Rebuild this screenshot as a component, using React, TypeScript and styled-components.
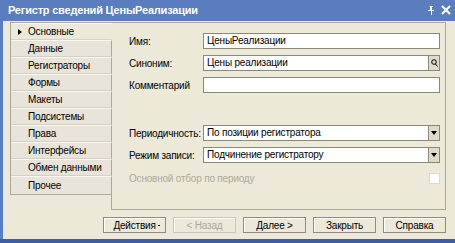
import React from "react";
import styled, {createGlobalStyle} from "styled-components";

const GlobalStyle = createGlobalStyle`
    html, body {
        margin: 0;
        padding: 0;
        width: 455px;
        height: 243px;
        overflow: hidden;
        background: #5a7dbf;
    }
    * {
        box-sizing: border-box;
    }
`;

const Window = styled.div`
    width: 455px;
    height: 243px;
    display: flex;
    flex-direction: column;
    background: #5a7dbf;
    border-bottom: 4px solid #3b5ea6;
    font-family: "Liberation Sans", Arial, sans-serif;
    font-size: 10px;
    color: #000;
`;

const TitleBar = styled.div`
    height: 21px;
    display: flex;
    align-items: center;
    padding: 0 4px 1px 8px;
    color: #fff;
    font-weight: bold;
    font-size: 11px;
`;

const Title = styled.div`
    flex: 1;
    letter-spacing: -0.2px;
`;

const TitleIcon = styled.svg`
    display: block;
    margin-left: 6px;
`;

const Body = styled.div`
    flex: 1;
    margin-left: 3px;
    background: #ece9d8;
    padding: 1px 9px 0 7px;
    display: flex;
    flex-direction: column;
`;

const Main = styled.div`
    display: flex;
    align-items: flex-start;
    height: 188px;
`;

const TabList = styled.div`
    width: 102px;
    height: 173px;
    margin-right: -1px;
    position: relative;
    z-index: 1;
    border: 1px solid #aca899;
    border-right: none;
    display: flex;
    flex-direction: column;
`;

const Tab = styled.div<{ $active?: boolean }>`
    height: 17px;
    flex: none;
    display: flex;
    align-items: center;
    padding-left: 17px;
    background: ${p => p.$active ? "#ece9d8" : "#e8e4da"};
    border-bottom: 1px solid ${p => p.$active ? "#d6d2c4" : "#d4d0c4"};
    border-top: 1px solid #f8f7f2;
    border-right: 1px solid ${p => p.$active ? "transparent" : "#aca899"};
    position: relative;
    white-space: nowrap;
    letter-spacing: -0.2px;
    &:last-child {
        border-bottom: none;
    }
`;

const Marker = styled.span`
    position: absolute;
    left: 7px;
    top: 5px;
    width: 0;
    height: 0;
    border-left: 4px solid #000;
    border-top: 3px solid transparent;
    border-bottom: 3px solid transparent;
`;

const Panel = styled.div`
    flex: 1;
    height: 188px;
    border: 1px solid #aca899;
    padding: 10px 5px 0 17px;
    display: flex;
    flex-direction: column;
`;

const FieldGrid = styled.div`
    display: grid;
    grid-template-columns: 74px 1fr;
    grid-auto-rows: 16px;
    row-gap: 6px;
    align-items: center;
`;

const Label = styled.div<{ $disabled?: boolean }>`
    white-space: nowrap;
    letter-spacing: -0.2px;
    color: ${p => p.$disabled ? "#aca899" : "#000"};
`;

const Field = styled.div`
    height: 16px;
    display: flex;
    border: 1px solid #8c8877;
    background: #fff;
`;

const FieldText = styled.div`
    flex: 1;
    padding-left: 3px;
    line-height: 14px;
    white-space: nowrap;
    overflow: hidden;
    letter-spacing: -0.2px;
`;

const FieldButton = styled.div`
    width: 11px;
    flex: none;
    border-left: 1px solid #8c8877;
    background: #dedbcc;
    display: flex;
    align-items: center;
    justify-content: center;
`;

const Arrow = styled.span`
    width: 0;
    height: 0;
    border-top: 4px solid #000;
    border-left: 3px solid transparent;
    border-right: 3px solid transparent;
`;

const Spacer = styled.div<{ $h: number }>`
    height: ${p => p.$h}px;
    flex: none;
`;

const CheckRow = styled.div`
    display: flex;
    align-items: center;
    justify-content: space-between;
    height: 11px;
`;

const CheckBox = styled.div`
    width: 11px;
    height: 11px;
    border: 1px solid #dcd9cc;
    background: #fff;
`;

const ButtonRow = styled.div`
    display: flex;
    justify-content: flex-end;
    gap: 7px;
    margin-top: 7px;
`;

const Button = styled.div<{ $disabled?: boolean }>`
    width: 63px;
    height: 16px;
    border: 1px solid ${p => p.$disabled ? "#c9c6b8" : "#8f8b7d"};
    box-shadow: inset 1px 1px 0 #fff;
    background: #ece9d8;
    display: flex;
    align-items: center;
    justify-content: center;
    color: ${p => p.$disabled ? "#aca899" : "#000"};
    letter-spacing: -0.2px;
    position: relative;
`;

const MenuDot = styled.span`
    position: absolute;
    right: 5px;
    top: 7px;
    width: 2px;
    height: 1px;
    background: #000;
`;

const tabs = ["Основные", "Данные", "Регистраторы", "Формы", "Макеты", "Подсистемы", "Права", "Интерфейсы", "Обмен данными", "Прочее"];

export default function App() {
    return (
        <>
            <GlobalStyle/>
            <Window>
                <TitleBar>
                    <Title>Регистр сведений ЦеныРеализации</Title>
                    <TitleIcon width="7" height="9" viewBox="0 0 7 9">
                        <path d="M2 0h3v1h-1v3h2v1h-6v-1h2v-3h-1zM3 5h1v4h-1z" fill="#fff"/>
                    </TitleIcon>
                    <TitleIcon width="10" height="10" viewBox="0 0 10 10">
                        <path d="M1 1L9 9M9 1L1 9" stroke="#fff" strokeWidth="2"/>
                    </TitleIcon>
                </TitleBar>
                <Body>
                    <Main>
                        <TabList>
                            {tabs.map((t, i) => (
                                <Tab key={t} $active={i === 0}>
                                    {i === 0 && <Marker/>}
                                    {t}
                                </Tab>
                            ))}
                        </TabList>
                        <Panel>
                            <FieldGrid>
                                <Label>Имя:</Label>
                                <Field><FieldText>ЦеныРеализации</FieldText></Field>
                                <Label>Синоним:</Label>
                                <Field>
                                    <FieldText>Цены реализации</FieldText>
                                    <FieldButton>
                                        <svg width="7" height="8" viewBox="0 0 7 8">
                                            <circle cx="3" cy="3" r="2.3" fill="none" stroke="#000" strokeWidth="1"/>
                                            <path d="M4.5 5L6.5 7.5" stroke="#000" strokeWidth="1"/>
                                        </svg>
                                    </FieldButton>
                                </Field>
                                <Label>Комментарий</Label>
                                <Field><FieldText/></Field>
                            </FieldGrid>
                            <Spacer $h={32}/>
                            <FieldGrid>
                                <Label>Периодичность:</Label>
                                <Field>
                                    <FieldText>По позиции регистратора</FieldText>
                                    <FieldButton><Arrow/></FieldButton>
                                </Field>
                                <Label>Режим записи:</Label>
                                <Field>
                                    <FieldText>Подчинение регистратору</FieldText>
                                    <FieldButton><Arrow/></FieldButton>
                                </Field>
                            </FieldGrid>
                            <Spacer $h={10}/>
                            <CheckRow>
                                <Label $disabled>Основной отбор по периоду</Label>
                                <CheckBox/>
                            </CheckRow>
                        </Panel>
                    </Main>
                    <ButtonRow>
                        <Button>Действия<MenuDot/></Button>
                        <Button $disabled>&lt; Назад</Button>
                        <Button>Далее &gt;</Button>
                        <Button>Закрыть</Button>
                        <Button>Справка</Button>
                    </ButtonRow>
                </Body>
            </Window>
        </>
    );
}
